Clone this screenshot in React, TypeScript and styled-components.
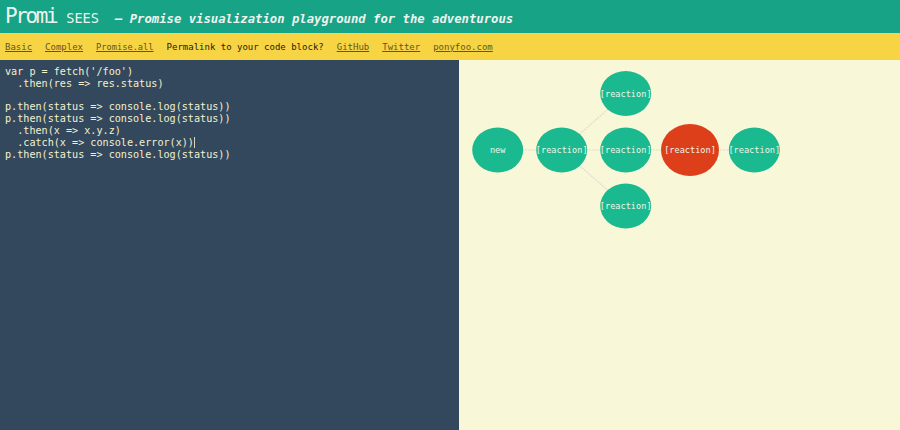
import React from "react";
import styled, { createGlobalStyle } from "styled-components";

const Global = createGlobalStyle`
  html, body { margin: 0; padding: 0; height: 100%; }
  body { background: #fafad2; overflow: hidden; }
  #root { height: 100%; }
`;

const MONO = `"DejaVu Sans Mono", "Liberation Mono", monospace`;

const Page = styled.div`
  display: flex;
  flex-direction: column;
  height: 430px;
  width: 900px;
`;

const Header = styled.header`
  height: 33px;
  background: #17a386;
  display: flex;
  align-items: baseline;
  padding: 4px 0 0 5px;
  box-sizing: border-box;
  color: #eef3ee;
  font-family: ${MONO};
`;

const Brand = styled.span`
  font-size: 21px;
  letter-spacing: -2.4px;
  line-height: 24px;
`;

const BrandCaps = styled.span`
  font-size: 13.6px;
  letter-spacing: 0;
  margin-left: 10px;
`;

const Tagline = styled.span`
  font-size: 12.25px;
  font-style: italic;
  font-weight: bold;
  margin-left: 16px;
`;

const Nav = styled.nav`
  height: 27px;
  background: #f6d443;
  display: flex;
  align-items: center;
  gap: 13px;
  padding: 0 5px;
  box-sizing: border-box;
  font-family: ${MONO};
  font-size: 9px;
`;

const NavLink = styled.a<{ $small?: boolean }>`
  color: #5e5626;
  text-decoration: underline;
  font-size: ${(p) => (p.$small ? "8.7px" : "9px")};
  cursor: pointer;
`;

const NavText = styled.span`
  color: #1f1c10;
`;

const Main = styled.main`
  flex: 1;
  display: flex;
  min-height: 0;
`;

const CodePanel = styled.section`
  width: 459px;
  background: #33485c;
  box-sizing: border-box;
  padding: 6px 5px;
`;

const Code = styled.pre`
  margin: 0;
  font-family: ${MONO};
  font-size: 10.15px;
  line-height: 11.8px;
  color: #f3f1cf;
  white-space: pre;
`;

const Caret = styled.span`
  display: inline-block;
  width: 0;
  height: 11px;
  border-left: 1px solid #d8d6b8;
  vertical-align: -2px;
`;

const GraphPanel = styled.section`
  flex: 1;
  background: #f8f7d8;
  overflow: hidden;
`;

const Graph = styled.svg`
  display: block;
`;

type N = { id: string; x: number; y: number; label: string; red?: boolean };

const nodes: N[] = [
  { id: "new", x: 38.7, y: 90, label: "new" },
  { id: "r1", x: 102.7, y: 90, label: "[reaction]" },
  { id: "top", x: 166.7, y: 33.5, label: "[reaction]" },
  { id: "mid", x: 166.7, y: 90, label: "[reaction]" },
  { id: "bot", x: 166.7, y: 146, label: "[reaction]" },
  { id: "red", x: 231, y: 90, label: "[reaction]", red: true },
  { id: "last", x: 295.3, y: 90, label: "[reaction]" },
];

const edges: [string, string][] = [
  ["new", "r1"],
  ["r1", "top"],
  ["r1", "mid"],
  ["r1", "bot"],
  ["mid", "red"],
  ["red", "last"],
];

const byId = (id: string) => nodes.find((n) => n.id === id)!;

const code = `var p = fetch('/foo')
  .then(res => res.status)

p.then(status => console.log(status))
p.then(status => console.log(status))
  .then(x => x.y.z)
  .catch(x => console.error(x))`;

export default function App() {
  return (
    <>
      <Global />
      <Page>
        <Header>
          <Brand>
            Promi<BrandCaps>SEES</BrandCaps>
          </Brand>
          <Tagline>– Promise visualization playground for the adventurous</Tagline>
        </Header>
        <Nav>
          <NavLink>Basic</NavLink>
          <NavLink>Complex</NavLink>
          <NavLink $small>Promise.all</NavLink>
          <NavText>Permalink to your code block?</NavText>
          <NavLink>GitHub</NavLink>
          <NavLink>Twitter</NavLink>
          <NavLink>ponyfoo.com</NavLink>
        </Nav>
        <Main>
          <CodePanel>
            <Code>
              {code}
              <Caret />
              {"\np.then(status => console.log(status))"}
            </Code>
          </CodePanel>
          <GraphPanel>
            <Graph width={441} height={370} viewBox="0 0 441 370">
              {edges.map(([a, b]) => {
                const A = byId(a);
                const B = byId(b);
                return (
                  <line
                    key={a + b}
                    x1={A.x}
                    y1={A.y}
                    x2={B.x}
                    y2={B.y}
                    stroke="#dcdcd6"
                    strokeWidth={1.2}
                    strokeDasharray="2 1"
                  />
                );
              })}
              {nodes.map((n) => (
                <g key={n.id}>
                  <ellipse
                    cx={n.x}
                    cy={n.y}
                    rx={n.red ? 29 : 25.5}
                    ry={n.red ? 26 : 22.5}
                    fill={n.red ? "#dd3f1a" : "#1bb990"}
                  />
                  <text
                    x={n.x}
                    y={n.y + 3}
                    textAnchor="middle"
                    fontFamily="DejaVu Sans Mono, monospace"
                    fontSize={8.6}
                    fill="#eef5e6"
                  >
                    {n.label}
                  </text>
                </g>
              ))}
            </Graph>
          </GraphPanel>
        </Main>
      </Page>
    </>
  );
}
